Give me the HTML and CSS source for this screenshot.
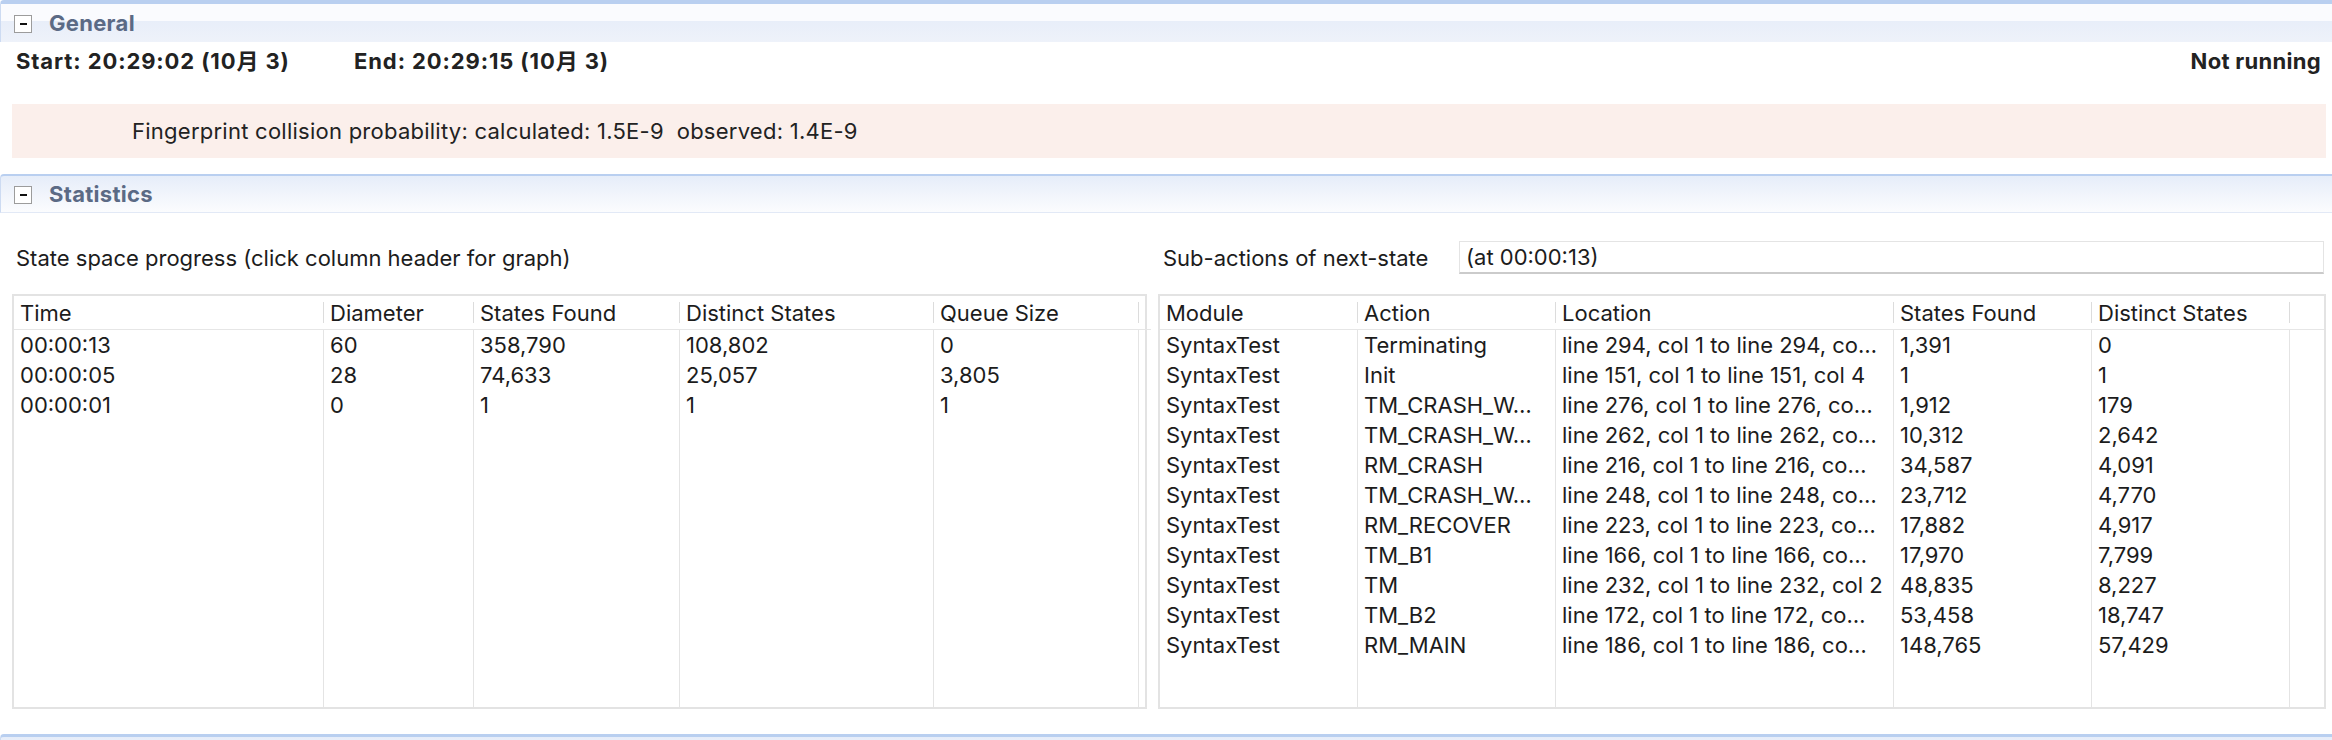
FILE: index.html
```html
<!DOCTYPE html>
<html>
<head>
<meta charset="utf-8">
<title>Model Checking Results</title>
<link rel="stylesheet" href="styles.css">
</head>
<body>
<section class="section general">
  <div class="sec-head head-general">
    <span class="toggle"></span>
    <span class="sec-title">General</span>
  </div>
  <div class="run-row">
    <div class="times">
      <span class="start">Start: 20:29:02 (10月 3)</span>
      <span>End: 20:29:15 (10月 3)</span>
    </div>
    <span class="state">Not running</span>
  </div>
  <div class="fp-box">Fingerprint collision probability: calculated: 1.5E-9&nbsp; observed: 1.4E-9</div>
</section>

<section class="section stats">
  <div class="sec-head head-stats">
    <span class="toggle"></span>
    <span class="sec-title">Statistics</span>
  </div>
  <div class="stats-body">
    <div class="pane pane-left">
      <div class="pane-label"><span class="label-left">State space progress (click column header for graph)</span></div>
      <div class="tbl tbl-left">
        <div class="th">Time</div><div class="th">Diameter</div><div class="th">States Found</div><div class="th">Distinct States</div><div class="th">Queue Size</div><div class="th fill"></div>
        <div class="td">00:00:13</div><div class="td">60</div><div class="td">358,790</div><div class="td">108,802</div><div class="td">0</div><div class="td fill"></div>
        <div class="td">00:00:05</div><div class="td">28</div><div class="td">74,633</div><div class="td">25,057</div><div class="td">3,805</div><div class="td fill"></div>
        <div class="td">00:00:01</div><div class="td">0</div><div class="td">1</div><div class="td">1</div><div class="td">1</div><div class="td fill"></div>
        <div class="td"></div><div class="td"></div><div class="td"></div><div class="td"></div><div class="td"></div><div class="td fill"></div>
      </div>
    </div>
    <div class="pane pane-right">
      <div class="pane-label">
        <span class="label-right">Sub-actions of next-state</span>
        <div class="input">(at 00:00:13)</div>
      </div>
      <div class="tbl tbl-right">
        <div class="th">Module</div><div class="th">Action</div><div class="th">Location</div><div class="th">States Found</div><div class="th">Distinct States</div><div class="th fill"></div>
        <div class="td">SyntaxTest</div><div class="td">Terminating</div><div class="td">line 294, col 1 to line 294, co…</div><div class="td">1,391</div><div class="td">0</div><div class="td fill"></div>
        <div class="td">SyntaxTest</div><div class="td">Init</div><div class="td">line 151, col 1 to line 151, col 4</div><div class="td">1</div><div class="td">1</div><div class="td fill"></div>
        <div class="td">SyntaxTest</div><div class="td">TM_CRASH_W…</div><div class="td">line 276, col 1 to line 276, co…</div><div class="td">1,912</div><div class="td">179</div><div class="td fill"></div>
        <div class="td">SyntaxTest</div><div class="td">TM_CRASH_W…</div><div class="td">line 262, col 1 to line 262, co…</div><div class="td">10,312</div><div class="td">2,642</div><div class="td fill"></div>
        <div class="td">SyntaxTest</div><div class="td">RM_CRASH</div><div class="td">line 216, col 1 to line 216, co…</div><div class="td">34,587</div><div class="td">4,091</div><div class="td fill"></div>
        <div class="td">SyntaxTest</div><div class="td">TM_CRASH_W…</div><div class="td">line 248, col 1 to line 248, co…</div><div class="td">23,712</div><div class="td">4,770</div><div class="td fill"></div>
        <div class="td">SyntaxTest</div><div class="td">RM_RECOVER</div><div class="td">line 223, col 1 to line 223, co…</div><div class="td">17,882</div><div class="td">4,917</div><div class="td fill"></div>
        <div class="td">SyntaxTest</div><div class="td">TM_B1</div><div class="td">line 166, col 1 to line 166, co…</div><div class="td">17,970</div><div class="td">7,799</div><div class="td fill"></div>
        <div class="td">SyntaxTest</div><div class="td">TM</div><div class="td">line 232, col 1 to line 232, col 2</div><div class="td">48,835</div><div class="td">8,227</div><div class="td fill"></div>
        <div class="td">SyntaxTest</div><div class="td">TM_B2</div><div class="td">line 172, col 1 to line 172, co…</div><div class="td">53,458</div><div class="td">18,747</div><div class="td fill"></div>
        <div class="td">SyntaxTest</div><div class="td">RM_MAIN</div><div class="td">line 186, col 1 to line 186, co…</div><div class="td">148,765</div><div class="td">57,429</div><div class="td fill"></div>
        <div class="td"></div><div class="td"></div><div class="td"></div><div class="td"></div><div class="td"></div><div class="td fill"></div>
      </div>
    </div>
  </div>
</section>

<section class="section next">
  <div class="sec-head head-next"></div>
</section>
</body>
</html>
```

FILE: styles.css
```css
* {
  box-sizing: border-box;
}

body {
  margin: 0;
  width: 2332px;
  height: 740px;
  overflow: hidden;
  background: #ffffff;
  font-family: Inter, "Noto Sans CJK SC", sans-serif;
  font-size: 22px;
  color: #1c1c1c;
}

/* section header bars */
.sec-head {
  display: flex;
  align-items: center;
  gap: 17px;
  padding-left: 13px;
  border-left: 1px solid #cddbf2;
  border-top-left-radius: 4px;
}

.head-general {
  height: 42px;
  border-top: 4px solid #b9cff0;
  background: linear-gradient(to bottom, #fafbfe 0, #fafbfe 17px, #e8eef9 17px, #eef2fa 100%);
}

.head-stats {
  height: 39px;
  border-top: 2px solid #b9cff0;
  border-bottom: 1px solid #e2e9f6;
  background: linear-gradient(to bottom, #e6edf9 0, #f3f6fc 60%, #fbfcfe 100%);
}

.head-next {
  height: 30px;
  border-top: 3px solid #b9cff0;
  background: linear-gradient(to bottom, #e6edf9, #fbfcfe);
}

.toggle {
  width: 18px;
  height: 18px;
  border: 1px solid #9c9c9c;
  background: #ffffff;
  display: flex;
  align-items: center;
  justify-content: center;
  margin-top: 2px;
  flex: none;
}

.toggle::before {
  content: "";
  width: 7px;
  height: 2px;
  background: #111111;
}

.sec-title {
  font-weight: 700;
  color: #5b6a85;
  letter-spacing: 0.3px;
}

/* general section */
.run-row {
  display: flex;
  justify-content: space-between;
  height: 62px;
  padding: 7px 11px 0 16px;
  font-weight: 700;
  color: #222222;
  line-height: 24px;
}

.times {
  display: flex;
  letter-spacing: 0.9px;
}

.start {
  width: 338px;
}

.state {
  letter-spacing: 0.3px;
}

.fp-box {
  display: flex;
  align-items: center;
  height: 54px;
  margin: 0 6px 16px 12px;
  padding-left: 120px;
  background: #fbefeb;
  color: #222222;
  letter-spacing: 0.25px;
}

/* statistics section */
.stats-body {
  display: flex;
  gap: 11px;
  padding: 0 6px 0 12px;
  margin-bottom: 25px;
}

.pane {
  display: flex;
  flex-direction: column;
}

.pane-left {
  width: 1135px;
  flex: none;
}

.pane-right {
  flex: 1;
}

.pane-label {
  display: flex;
  align-items: center;
  height: 33px;
  margin: 28px 0 20px;
}

.label-left {
  padding-left: 4px;
}

.label-right {
  flex: 0 0 301px;
  padding-left: 5px;
}

.input {
  flex: 1;
  height: 33px;
  margin-right: 2px;
  display: flex;
  align-items: center;
  padding-left: 6px;
  border: 1px solid #e4e4e4;
  border-bottom: 2px solid #cbcbcb;
  background: #ffffff;
}

/* tables */
.tbl {
  display: grid;
  height: 415px;
  border: 2px solid #e3e3e3;
  background: #ffffff;
}

.tbl-left {
  grid-template-columns: 310px 150px 206px 254px 205px 6px;
  grid-template-rows: 34px repeat(3, 30px) 1fr;
}

.tbl-right {
  grid-template-columns: 198px 198px 338px 198px 198px 34px;
  grid-template-rows: 34px repeat(11, 30px) 1fr;
}

.th {
  position: relative;
  display: flex;
  align-items: center;
  padding: 0 6px;
  border-bottom: 1px solid #e6e6e6;
  white-space: nowrap;
  overflow: hidden;
}

.th::after {
  content: "";
  position: absolute;
  right: 0;
  top: 6px;
  bottom: 6px;
  width: 1px;
  background: #dcdcdc;
}

.th.fill::after {
  display: none;
}

.td {
  padding: 0 2px 0 6px;
  line-height: 30px;
  border-right: 1px solid #e4e4e4;
  white-space: nowrap;
  overflow: hidden;
  text-overflow: clip;
}

.td.fill {
  border-right: none;
}
```
